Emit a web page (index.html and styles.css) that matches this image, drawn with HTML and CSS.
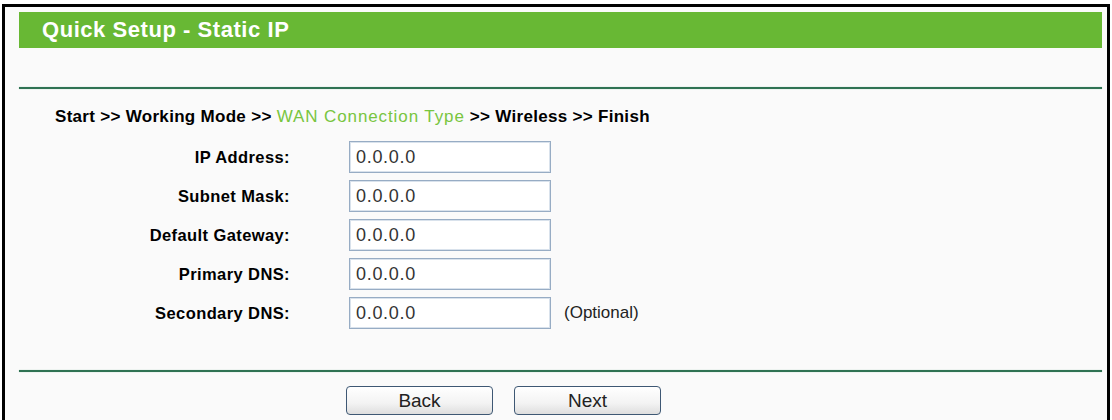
FILE: index.html
```html
<!DOCTYPE html>
<html lang="en">
<head>
  <meta charset="UTF-8">
  <title>Quick Setup - Static IP</title>
  <link rel="stylesheet" href="styles.css">
</head>
<body>
  <div class="panel">
    <div class="title-bar">Quick Setup - Static IP</div>
    <div class="rule"></div>

    <p class="steps">Start &gt;&gt; Working Mode &gt;&gt; <span class="current">WAN Connection Type</span> &gt;&gt; Wireless &gt;&gt; Finish</p>

    <!-- Static IP fields -->
    <div class="form">
      <div class="row">
        <label for="ip">IP Address:</label>
        <input type="text" id="ip" value="0.0.0.0">
      </div>
      <div class="row">
        <label for="mask">Subnet Mask:</label>
        <input type="text" id="mask" value="0.0.0.0">
      </div>
      <div class="row">
        <label for="gateway">Default Gateway:</label>
        <input type="text" id="gateway" value="0.0.0.0">
      </div>
      <div class="row">
        <label for="dns1">Primary DNS:</label>
        <input type="text" id="dns1" value="0.0.0.0">
      </div>
      <div class="row">
        <label for="dns2">Secondary DNS:</label>
        <input type="text" id="dns2" value="0.0.0.0">
        <span class="hint">(Optional)</span>
      </div>
    </div>

    <div class="rule rule-bottom"></div>

    <div class="buttons">
      <button type="button">Back</button>
      <button type="button">Next</button>
    </div>
  </div>
</body>
</html>
```

FILE: styles.css
```css
/* General styles */
body {
  margin: 4px 0 0 2px;
  padding: 0;
  background: #ffffff;
  font-family: "Liberation Sans", Arial, sans-serif;
  color: #000000;
}

.panel {
  width: 1108px;
  height: 430px;
  box-sizing: border-box;
  border: 3px solid #000000;
  background: #fafafa;
  padding: 5px 5px 0 14px;
}

/* Green title bar */
.title-bar {
  height: 36px;
  line-height: 36px;
  background: #68b834;
  color: #ffffff;
  font-size: 22px;
  font-weight: bold;
  letter-spacing: 0.55px;
  padding-left: 23px;
}

.rule {
  height: 2px;
  background: #2f7253;
  box-shadow: 0 0 1px #7fb395;
  margin-top: 39px;
}

.rule-bottom {
  margin-top: 41px;
}

/* Wizard steps */
.steps {
  margin: 18px 0 0 36px;
  height: 20px;
  line-height: 20px;
  font-size: 17px;
  font-weight: bold;
  letter-spacing: 0.3px;
}

.steps .current {
  color: #78c540;
  font-weight: normal;
  letter-spacing: 0.9px;
}

/* Form */
.form {
  display: flex;
  flex-direction: column;
  gap: 7px;
  margin-top: 14px;
}

.row {
  display: flex;
  align-items: center;
  height: 32px;
}

.row label {
  width: 271px;
  text-align: right;
  font-size: 16.5px;
  font-weight: bold;
  letter-spacing: 0.4px;
  margin-right: 59px;
}

.row input {
  width: 202px;
  height: 32px;
  box-sizing: border-box;
  border: 1px solid #97acc4;
  box-shadow: inset 0 0 0 1px #d9e2ec;
  background: #ffffff;
  padding: 0 6px;
  font-family: "Liberation Sans", Arial, sans-serif;
  font-size: 18px;
  letter-spacing: 0.7px;
  color: #333333;
}

.hint {
  margin-left: 13px;
  font-size: 17px;
  color: #222222;
}

/* Buttons */
.buttons {
  display: flex;
  gap: 21px;
  margin-top: 14px;
  padding-left: 327px;
}

.buttons button {
  width: 147px;
  height: 29px;
  border: 1px solid #3e5874;
  border-radius: 4px;
  background: linear-gradient(#ffffff, #f3f3f3 60%, #dedede);
  font-family: "Liberation Sans", Arial, sans-serif;
  font-size: 19px;
  color: #222222;
  padding: 0;
}
```
